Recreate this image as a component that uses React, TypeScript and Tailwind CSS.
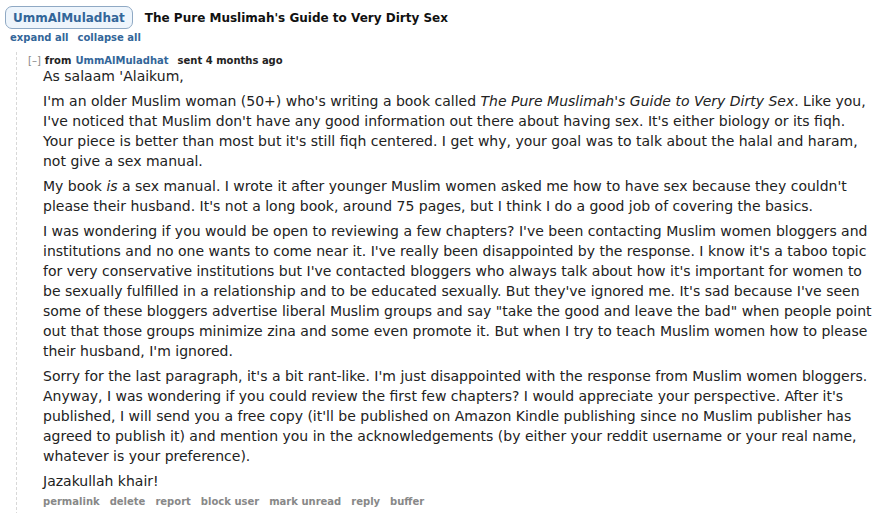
import React from "react";

const V = { fontFamily: '"DejaVu Sans", Verdana, sans-serif' };

const paras: React.ReactNode[][] = [
  ["As salaam 'Alaikum,"],
  [
    <>I'm an older Muslim woman (50+) who's writing a book called <i>The Pure Muslimah's Guide to Very Dirty Sex</i>. Like you,</>,
    "I've noticed that Muslim don't have any good information out there about having sex. It's either biology or its fiqh.",
    "Your piece is better than most but it's still fiqh centered. I get why, your goal was to talk about the halal and haram,",
    "not give a sex manual.",
  ],
  [
    <>My book <i>is</i> a sex manual. I wrote it after younger Muslim women asked me how to have sex because they couldn't</>,
    "please their husband. It's not a long book, around 75 pages, but I think I do a good job of covering the basics.",
  ],
  [
    "I was wondering if you would be open to reviewing a few chapters? I've been contacting Muslim women bloggers and",
    "institutions and no one wants to come near it. I've really been disappointed by the response. I know it's a taboo topic",
    "for very conservative institutions but I've contacted bloggers who always talk about how it's important for women to",
    "be sexually fulfilled in a relationship and to be educated sexually. But they've ignored me. It's sad because I've seen",
    "some of these bloggers advertise liberal Muslim groups and say \"take the good and leave the bad\" when people point",
    "out that those groups minimize zina and some even promote it. But when I try to teach Muslim women how to please",
    "their husband, I'm ignored.",
  ],
  [
    "Sorry for the last paragraph, it's a bit rant-like. I'm just disappointed with the response from Muslim women bloggers.",
    "Anyway, I was wondering if you could review the first few chapters? I would appreciate your perspective. After it's",
    "published, I will send you a free copy (it'll be published on Amazon Kindle publishing since no Muslim publisher has",
    "agreed to publish it) and mention you in the acknowledgements (by either your reddit username or your real name,",
    "whatever is your preference).",
  ],
  ["Jazakullah khair!"],
];

const buttons = ["permalink", "delete", "report", "block user", "mark unread", "reply", "buffer"];

export default function App() {
  return (
    <div className="w-[886px] h-[513px] bg-white overflow-hidden text-[#222]" style={V}>
      <div className="flex items-center pl-[5px] pt-[6px]">
        <span className="h-[23px] px-[7px] flex items-center rounded-[7px] border border-[#8fa9c4] bg-[#eef5fc] text-[#336699] font-bold text-[12px]">
          UmmAlMuladhat
        </span>
        <span className="ml-[12px] font-bold text-[12px] text-[#111]">
          The Pure Muslimah's Guide to Very Dirty Sex
        </span>
      </div>
      <div className="pl-[10px] h-[16px] flex items-center gap-[9px] text-[10px] font-bold text-[#336699]">
        <span>expand all</span>
        <span>collapse all</span>
      </div>
      <div className="ml-[16px] mt-[7px] border-l border-dashed border-[#d8d8d8] pl-[11px] pb-[10px]">
        <div className="flex items-center h-[14px] text-[10px] pt-[2px]">
          <span className="text-[#888] font-normal mr-[4px]">[–]</span>
          <span className="font-bold text-[#222] mr-[4px]">from</span>
          <span className="font-bold text-[#336699] mr-[9px]">UmmAlMuladhat</span>
          <span className="font-bold text-[#222]">sent 4 months ago</span>
        </div>
        <div className="pl-[15px] text-[14px] leading-[20px] text-[#222]">
          {paras.map((p, i) => (
            <div key={i} className="mt-[5px] first:mt-0">
              {p.map((l, j) => (
                <div key={j} className="whitespace-nowrap">{l}</div>
              ))}
            </div>
          ))}
          <div className="flex gap-[10px] mt-[3px] text-[10px] font-bold text-[#888] h-[16px] items-center">
            {buttons.map((b) => (
              <span key={b}>{b}</span>
            ))}
          </div>
        </div>
      </div>
    </div>
  );
}
